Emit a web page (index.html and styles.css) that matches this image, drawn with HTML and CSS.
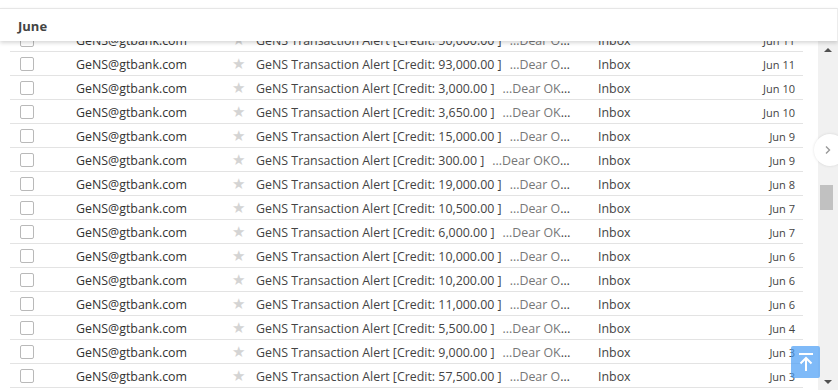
FILE: index.html
```html
<!DOCTYPE html>
<html lang="en">
<head>
  <meta charset="UTF-8">
  <meta name="viewport" content="width=device-width, initial-scale=1.0">
  <title>Mail - June</title>
  <link rel="stylesheet" href="styles.css">
</head>
<body>
  <div class="page">
    <div class="top-strip"></div>
    <div class="month-bar">
      <span class="month-title">June</span>
    </div>

    <div class="content">
      <div class="mail-pane">
        <div class="mail-list" id="mailList">
          <div class="mail-row"><span class="check"></span><span class="sender">GeNS@gtbank.com</span><span class="star">★</span><span class="summary"><span class="subject">GeNS Transaction Alert [Credit: 50,000.00 ]</span><span class="snippet">...Dear OKOSI, this is to inform you</span></span><span class="folder">Inbox</span><span class="date">Jun 11</span></div>
          <div class="mail-row"><span class="check"></span><span class="sender">GeNS@gtbank.com</span><span class="star">★</span><span class="summary"><span class="subject">GeNS Transaction Alert [Credit: 93,000.00 ]</span><span class="snippet">...Dear OKOSI, this is to inform you</span></span><span class="folder">Inbox</span><span class="date">Jun 11</span></div>
          <div class="mail-row"><span class="check"></span><span class="sender">GeNS@gtbank.com</span><span class="star">★</span><span class="summary"><span class="subject">GeNS Transaction Alert [Credit: 3,000.00 ]</span><span class="snippet">...Dear OKOSI, this is to inform you</span></span><span class="folder">Inbox</span><span class="date">Jun 10</span></div>
          <div class="mail-row"><span class="check"></span><span class="sender">GeNS@gtbank.com</span><span class="star">★</span><span class="summary"><span class="subject">GeNS Transaction Alert [Credit: 3,650.00 ]</span><span class="snippet">...Dear OKOSI, this is to inform you</span></span><span class="folder">Inbox</span><span class="date">Jun 10</span></div>
          <div class="mail-row"><span class="check"></span><span class="sender">GeNS@gtbank.com</span><span class="star">★</span><span class="summary"><span class="subject">GeNS Transaction Alert [Credit: 15,000.00 ]</span><span class="snippet">...Dear OKOSI, this is to inform you</span></span><span class="folder">Inbox</span><span class="date">Jun 9</span></div>
          <div class="mail-row"><span class="check"></span><span class="sender">GeNS@gtbank.com</span><span class="star">★</span><span class="summary"><span class="subject">GeNS Transaction Alert [Credit: 300.00 ]</span><span class="snippet">...Dear OKOSI, this is to inform you</span></span><span class="folder">Inbox</span><span class="date">Jun 9</span></div>
          <div class="mail-row"><span class="check"></span><span class="sender">GeNS@gtbank.com</span><span class="star">★</span><span class="summary"><span class="subject">GeNS Transaction Alert [Credit: 19,000.00 ]</span><span class="snippet">...Dear OKOSI, this is to inform you</span></span><span class="folder">Inbox</span><span class="date">Jun 8</span></div>
          <div class="mail-row"><span class="check"></span><span class="sender">GeNS@gtbank.com</span><span class="star">★</span><span class="summary"><span class="subject">GeNS Transaction Alert [Credit: 10,500.00 ]</span><span class="snippet">...Dear OKOSI, this is to inform you</span></span><span class="folder">Inbox</span><span class="date">Jun 7</span></div>
          <div class="mail-row"><span class="check"></span><span class="sender">GeNS@gtbank.com</span><span class="star">★</span><span class="summary"><span class="subject">GeNS Transaction Alert [Credit: 6,000.00 ]</span><span class="snippet">...Dear OKOSI, this is to inform you</span></span><span class="folder">Inbox</span><span class="date">Jun 7</span></div>
          <div class="mail-row"><span class="check"></span><span class="sender">GeNS@gtbank.com</span><span class="star">★</span><span class="summary"><span class="subject">GeNS Transaction Alert [Credit: 10,000.00 ]</span><span class="snippet">...Dear OKOSI, this is to inform you</span></span><span class="folder">Inbox</span><span class="date">Jun 6</span></div>
          <div class="mail-row"><span class="check"></span><span class="sender">GeNS@gtbank.com</span><span class="star">★</span><span class="summary"><span class="subject">GeNS Transaction Alert [Credit: 10,200.00 ]</span><span class="snippet">...Dear OKOSI, this is to inform you</span></span><span class="folder">Inbox</span><span class="date">Jun 6</span></div>
          <div class="mail-row"><span class="check"></span><span class="sender">GeNS@gtbank.com</span><span class="star">★</span><span class="summary"><span class="subject">GeNS Transaction Alert [Credit: 11,000.00 ]</span><span class="snippet">...Dear OKOSI, this is to inform you</span></span><span class="folder">Inbox</span><span class="date">Jun 6</span></div>
          <div class="mail-row"><span class="check"></span><span class="sender">GeNS@gtbank.com</span><span class="star">★</span><span class="summary"><span class="subject">GeNS Transaction Alert [Credit: 5,500.00 ]</span><span class="snippet">...Dear OKOSI, this is to inform you</span></span><span class="folder">Inbox</span><span class="date">Jun 4</span></div>
          <div class="mail-row"><span class="check"></span><span class="sender">GeNS@gtbank.com</span><span class="star">★</span><span class="summary"><span class="subject">GeNS Transaction Alert [Credit: 9,000.00 ]</span><span class="snippet">...Dear OKOSI, this is to inform you</span></span><span class="folder">Inbox</span><span class="date">Jun 3</span></div>
          <div class="mail-row"><span class="check"></span><span class="sender">GeNS@gtbank.com</span><span class="star">★</span><span class="summary"><span class="subject">GeNS Transaction Alert [Credit: 57,500.00 ]</span><span class="snippet">...Dear OKOSI, this is to inform you</span></span><span class="folder">Inbox</span><span class="date">Jun 3</span></div>
        </div>
      </div>

      <!-- 滚动条 -->
      <div class="scrollbar">
        <div class="scroll-arrow up"></div>
        <div class="scroll-track">
          <div class="scroll-thumb"></div>
        </div>
        <div class="scroll-arrow down"></div>
      </div>
    </div>

    <button class="pager-next" aria-label="Next">
      <svg width="10" height="10" viewBox="0 0 10 10"><path d="M3 1.5 L6.5 5 L3 8.5" fill="none" stroke="#999" stroke-width="1.4"/></svg>
    </button>

    <button class="back-top" aria-label="Back to top">
      <svg width="18" height="20" viewBox="0 0 18 20"><path d="M2 2 H16 M9 19 V6 M3.5 11.5 L9 6 L14.5 11.5" fill="none" stroke="#fff" stroke-width="2"/></svg>
    </button>
  </div>
</body>
</html>
```

FILE: styles.css
```css
* {
  box-sizing: border-box;
  margin: 0;
  padding: 0;
}

body {
  background-color: #fff;
  color: #444;
  font-family: 'Open Sans', 'Noto Sans', sans-serif;
  font-size: 12.4px;
  overflow: hidden;
}

.page {
  position: relative;
  width: 838px;
  height: 390px;
  display: flex;
  flex-direction: column;
  overflow: hidden;
}

/* 顶部月份栏 */
.top-strip {
  height: 8px;
  background-color: #fff;
}

.month-bar {
  position: relative;
  z-index: 2;
  height: 33px;
  display: flex;
  align-items: center;
  padding: 1px 18px 0;
  background-color: #fff;
  border-top: 1px solid #e6e6e6;
  border-right: 1px solid #ececec;
  box-shadow: 0 2px 4px rgba(0, 0, 0, 0.16);
}

.month-title {
  font-weight: 700;
  font-size: 13px;
  color: #444;
}

/* 邮件列表 */
.content {
  flex: 1;
  display: flex;
  min-height: 0;
}

.mail-pane {
  flex: 1;
  overflow: hidden;
  padding: 0 15px 0 10px;
}

.mail-list {
  margin-top: -13px;
}

.mail-row {
  display: flex;
  align-items: center;
  height: 24px;
  padding-top: 1px;
  border-bottom: 1px solid #e3e3e3;
  white-space: nowrap;
}

.check {
  width: 14px;
  height: 14px;
  margin: -1px 42px 0 10px;
  border: 1px solid #b9b9b9;
  border-radius: 2px;
  background-color: #fff;
  flex-shrink: 0;
}

.sender {
  width: 156px;
  color: #333;
  flex-shrink: 0;
}

.star {
  width: 24px;
  color: #d4d4d4;
  font-size: 15px;
  line-height: 1;
  font-family: 'DejaVu Sans', sans-serif;
  flex-shrink: 0;
}

.summary {
  width: 320px;
  margin-right: 22px;
  overflow: hidden;
  text-overflow: ellipsis;
  flex-shrink: 0;
}

.subject {
  color: #444;
  margin-right: 8px;
}

.snippet {
  color: #777;
}

.folder {
  width: 80px;
  color: #444;
  flex-shrink: 0;
}

.date {
  flex: 1;
  text-align: right;
  padding-right: 8px;
  color: #444;
  font-size: 11px;
}

/* 滚动条 */
.scrollbar {
  width: 20px;
  display: flex;
  flex-direction: column;
  background-color: #f1f1f1;
}

.scroll-arrow {
  height: 17px;
  display: flex;
  align-items: center;
  justify-content: center;
}

.scroll-arrow::after {
  content: '';
  border-left: 4px solid transparent;
  border-right: 4px solid transparent;
}

.scroll-arrow.up::after {
  border-bottom: 4px solid #505050;
}

.scroll-arrow.down::after {
  border-top: 4px solid #505050;
}

.scroll-track {
  flex: 1;
  padding: 127px 5px 0 2px;
}

.scroll-thumb {
  height: 25px;
  background-color: #c1c1c1;
}

/* 悬浮按钮 */
.pager-next {
  position: absolute;
  left: 814px;
  top: 134px;
  width: 32px;
  height: 32px;
  border: none;
  border-radius: 50%;
  background-color: #fff;
  box-shadow: 0 0 3px rgba(0, 0, 0, 0.12);
  display: flex;
  align-items: center;
  padding-left: 9px;
  cursor: pointer;
}

.back-top {
  position: absolute;
  left: 791px;
  top: 346px;
  width: 29px;
  height: 32px;
  border: none;
  border-radius: 2px;
  background-color: rgba(72, 156, 245, 0.7);
  display: flex;
  align-items: center;
  justify-content: center;
  cursor: pointer;
}
```
